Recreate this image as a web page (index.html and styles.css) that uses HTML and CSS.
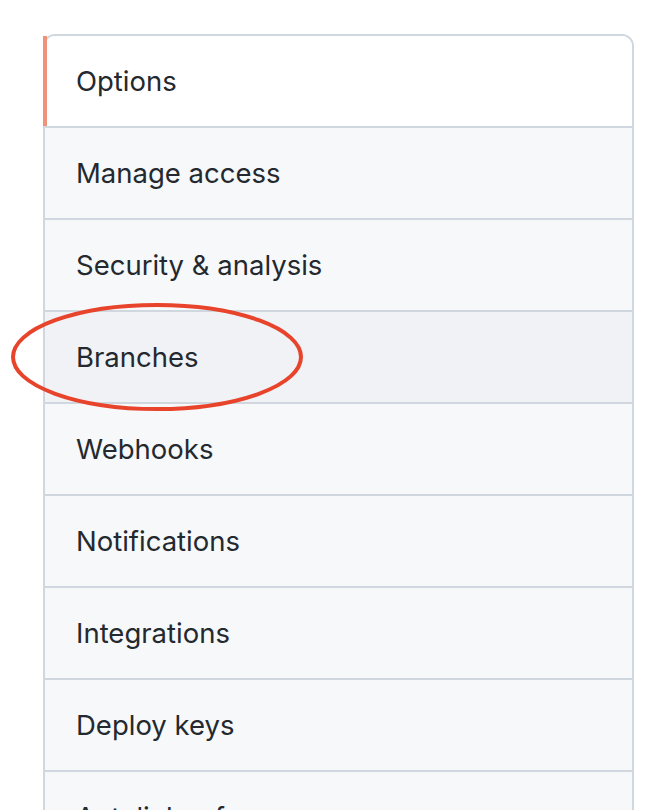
FILE: index.html
```html
<!DOCTYPE html>
<html lang="en">
<head>
<meta charset="utf-8">
<title>Settings menu</title>
<link rel="stylesheet" href="styles.css">
</head>
<body>
<div class="page">
  <nav class="menu">
    <a class="menu-item selected">Options</a>
    <a class="menu-item">Manage access</a>
    <a class="menu-item">Security &amp; analysis</a>
    <a class="menu-item hover">Branches</a>
    <a class="menu-item">Webhooks</a>
    <a class="menu-item">Notifications</a>
    <a class="menu-item">Integrations</a>
    <a class="menu-item">Deploy keys</a>
    <a class="menu-item">Autolink references</a>
  </nav>
  <svg class="circle" width="300" height="114" viewBox="0 0 300 114">
    <ellipse cx="146" cy="57" rx="144" ry="52" fill="none" stroke="#e8432b" stroke-width="4"/>
  </svg>
</div>
</body>
</html>
```
FILE: styles.css
```css
html, body {
  margin: 0;
  padding: 0;
  background: #ffffff;
  overflow: hidden;
}
body {
  font-family: Inter, "Noto Sans", "Liberation Sans", sans-serif;
  color: #24292f;
}
.page {
  position: relative;
  padding: 34px 0 0 43px;
  height: 776px;
}
.menu {
  width: 591px;
  box-sizing: border-box;
  border: 2px solid #d0d7de;
  border-radius: 12px;
  display: flex;
  flex-direction: column;
}
.menu-item {
  position: relative;
  display: flex;
  align-items: center;
  height: 90px;
  flex: none;
  padding-left: 31px;
  font-size: 27.5px;
  background: #f6f8fa;
  border-bottom: 2px solid #d0d7de;
}
.menu-item.selected {
  background: #ffffff;
  border-radius: 10px 10px 0 0;
}
.menu-item.selected::before {
  content: "";
  position: absolute;
  left: -2px;
  top: 0;
  bottom: 0;
  width: 4px;
  background: #f0917a;
}
.menu-item.hover {
  background: #f0f2f5;
}
.circle {
  position: absolute;
  left: 11px;
  top: 300px;
}
```
